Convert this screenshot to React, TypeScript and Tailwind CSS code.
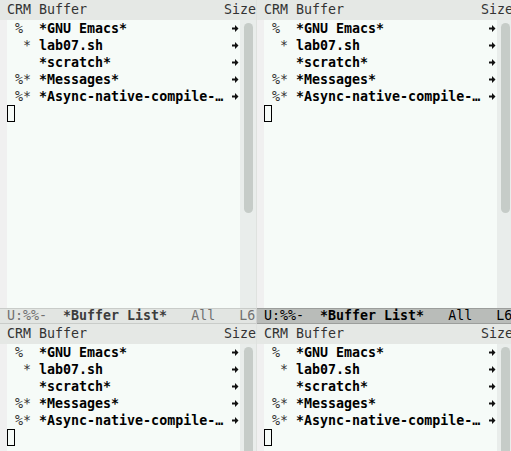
import React from "react";

const rows = [
  { flags: " % ", name: "*GNU Emacs*" },
  { flags: "  *", name: "lab07.sh" },
  { flags: "   ", name: "*scratch*" },
  { flags: " %*", name: "*Messages*" },
  { flags: " %*", name: "*Async-native-compile-…" },
];

const mono = "font-['DejaVu_Sans_Mono',monospace] text-[13.3px] whitespace-pre";

function Arrow() {
  return (
    <svg width="8" height="17" viewBox="0 0 8 17" className="block">
      <path d="M1 7.5H4V5L7.5 8.5L4 12V9.5H1Z" fill="#111" />
    </svg>
  );
}

function Window({ thumbHeight }: { thumbHeight: number }) {
  return (
    <div className="flex h-full w-[256px] shrink-0 flex-col">
      <div className={`flex h-[20px] shrink-0 items-center justify-between bg-[#e5e8e5] pl-[7px] leading-[20px] text-[#333] ${mono}`}>
        <span>CRM Buffer</span>
        <span>Size</span>
      </div>
      <div className="flex min-h-0 flex-1">
        <div className="w-[7px] shrink-0 bg-[#f0f0f0]" />
        <div className={`w-[224px] shrink-0 bg-[#f6fbf8] leading-[17px] ${mono}`}>
          {rows.map((r) => (
            <div key={r.name} className="flex h-[17px]">
              <span className="text-[#333]">{r.flags} </span>
              <span className="font-bold text-black">{r.name}</span>
            </div>
          ))}
          <div className="h-[17px] w-[8px] border border-black" />
        </div>
        <div className="w-[9px] shrink-0 bg-[#f6fbf8]">
          {rows.map((r) => (
            <Arrow key={r.name} />
          ))}
        </div>
        <div className="flex w-[16px] shrink-0 justify-center bg-[#e9edeb]">
          <div className="mt-[3px] w-[9px] rounded-full bg-[#c6ccc8]" style={{ height: thumbHeight }} />
        </div>
      </div>
    </div>
  );
}

function ModeLine({ active }: { active?: boolean }) {
  return (
    <div
      className={`flex h-[16px] w-[256px] shrink-0 items-center border-y pl-[7px] leading-[14px] ${mono} ${
        active ? "border-[#9c9e9c] bg-[#b9bcb9] text-black" : "border-[#c9ccc9] bg-[#e2e5e2] text-[#707070]"
      }`}
    >
      <span>U:%%-  </span>
      <span className={active ? "font-bold text-black" : "font-bold text-[#3c3c3c]"}>*Buffer List*</span>
      <span>   All   L6</span>
    </div>
  );
}

export default function App() {
  return (
    <div className="flex h-[451px] w-[511px] flex-col overflow-hidden bg-[#f0f0f0]">
      <div className="flex h-[308px] shrink-0 gap-px bg-[#dfe2df]">
        <Window thumbHeight={190} />
        <Window thumbHeight={190} />
      </div>
      <div className="flex shrink-0 gap-px bg-[#d0d0d0]">
        <ModeLine />
        <ModeLine active />
      </div>
      <div className="flex min-h-0 flex-1 gap-px bg-[#dfe2df]">
        <Window thumbHeight={400} />
        <Window thumbHeight={400} />
      </div>
    </div>
  );
}
